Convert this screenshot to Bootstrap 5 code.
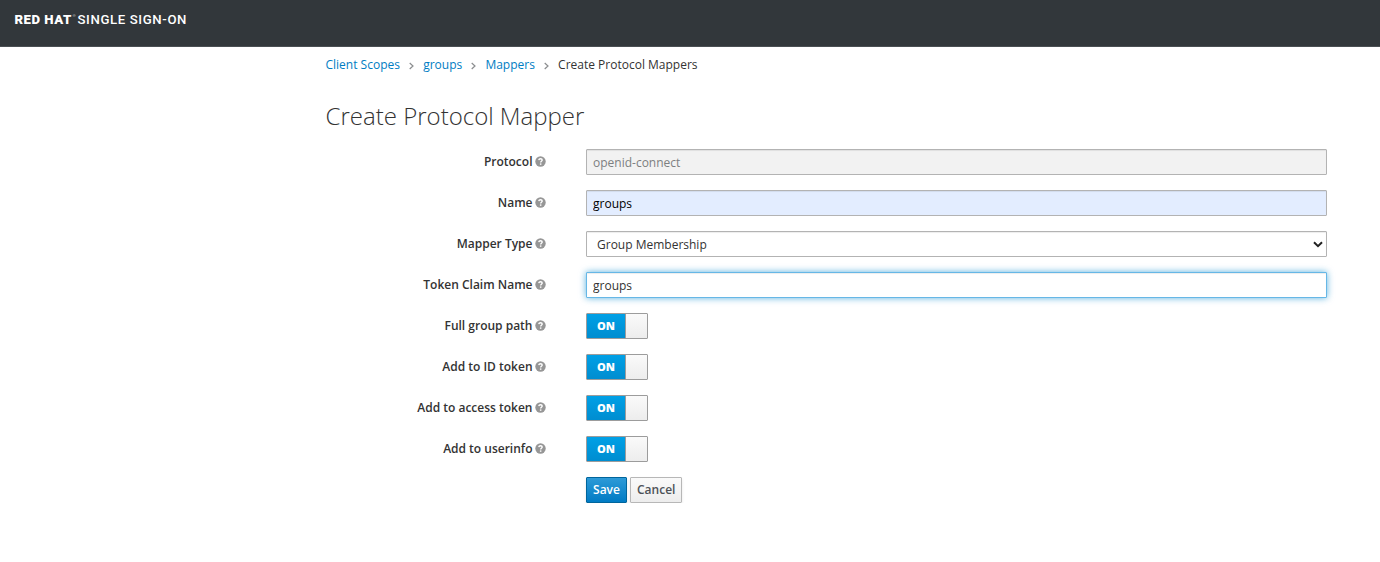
<!DOCTYPE html>
<html lang="en">
<head>
<meta charset="utf-8">
<meta name="viewport" content="width=device-width, initial-scale=1">
<title>Create Protocol Mapper</title>
<link rel="stylesheet" href="https://cdn.jsdelivr.net/npm/bootstrap@5.3.0/dist/css/bootstrap.min.css">
<style>
body{font-family:"Open Sans",sans-serif;font-size:12px;line-height:20px;color:#333;overflow:hidden}
.topbar{height:47px;background:#32373b;border-bottom:1px solid #4a4f53;padding:0 0 0 14.5px}
.brand{font:500 13.2px/16px Roboto,sans-serif;color:#fff;margin-top:12px;white-space:nowrap}
.brand-a{font-weight:900;letter-spacing:.5px;width:58px}
.brand-tm{font-size:4px;line-height:8px;width:5px;opacity:.6}
.brand-b{letter-spacing:.62px}
.page{width:1002px;margin-left:325px;padding-top:8px}
.breadcrumb{--bs-breadcrumb-divider:none;margin:0 0 0 .5px;font-size:12px}
.breadcrumb a{color:#007dc3;text-decoration:none}
.chev{width:5px;height:8px;margin:1px 9.1px 0;fill:none;stroke:#8b8d8f;stroke-width:1.2}
h1{font-size:24px;font-weight:300;line-height:26px;margin:28px 0 20px .6px;color:#333}
.rows{display:grid;row-gap:15px}
.line{display:grid;grid-template-columns:221px 741px;column-gap:40px;height:26px}
.line label{font-weight:600;justify-self:end;display:flex;align-items:center;gap:2.5px;height:26px;white-space:nowrap}
.help{width:11px;height:11px;margin-bottom:1px}
.form-control,.form-select{height:26px;border:1px solid #b3b3b3;border-radius:1px;padding:2px 6px;font-size:12px;line-height:20px;color:#333;box-shadow:inset 0 1px 1px rgba(0,0,0,.075)}
.form-control:disabled{background:#f2f2f2;color:#7d7f81}
.filled{background:#e3edff!important;color:#000}
.active-field{border-color:#66b7e6;box-shadow:inset 0 1px 1px rgba(0,0,0,.075),0 0 7px rgba(0,136,206,.65)}
.form-select{padding:3px 6px 1px 10px;background-image:url("data:image/svg+xml,%3Csvg xmlns='http://www.w3.org/2000/svg' viewBox='0 0 10 7'%3E%3Cpath d='M1 1.2 5 5.2 9 1.2' fill='none' stroke='%23222' stroke-width='2'/%3E%3C/svg%3E");background-size:10px 7px;background-position:right 3px center}
.toggle{width:62px;height:26px;border:1px solid #9c9c9c;border-radius:1px;padding:0;display:flex;overflow:hidden;background:none}
.toggle-on{width:39px;line-height:24px;font-size:11px;font-weight:800;color:#fff;background:linear-gradient(#00a0e6,#008dd0);border-right:1px solid #9c9c9c;text-align:center;flex:none}
.toggle-knob{flex:1;height:24px;background:linear-gradient(#fafafa,#ededed)}
.btn{height:26px;border-radius:1px;padding:2px 6px;font-size:12px;line-height:20px;font-weight:600;box-shadow:0 2px 3px rgba(3,3,3,.1);width:52px}
.btn-primary{background:linear-gradient(#2d9ad7,#007bc4);border-color:#00659c;width:41px}
.btn-light{background:linear-gradient(#fafafa,#ededed);border-color:#b7b7b7;color:#4d5258}
</style>
</head>
<body class="bg-white">
<svg class="d-none"><symbol id="q" viewBox="0 0 11 11"><circle cx="5.5" cy="5.5" r="5.2" fill="#969696"/><path d="M3.7 4.1C4 2.9 4.8 2.7 5.5 2.7c1 0 1.7.6 1.7 1.4 0 1.1-1.5 1.1-1.5 2.3" fill="none" stroke="#fff" stroke-width="1.4"/><path d="M4.9 7.4h1.5v1.4H4.9z" fill="#fff"/></symbol></svg>
<nav class="topbar d-flex align-items-start"><div class="brand d-flex"><span class="brand-a">RED HAT</span><span class="brand-tm">®</span><span class="brand-b">SINGLE SIGN-ON</span></div></nav>
<main class="page">
<nav><ol class="breadcrumb align-items-center">
<li><a href="#">Client Scopes</a></li><svg class="chev" viewBox="0 0 5 8"><path d="M.7 1 4 4 .7 7"/></svg>
<li><a href="#">groups</a></li><svg class="chev" viewBox="0 0 5 8"><path d="M.7 1 4 4 .7 7"/></svg>
<li><a href="#">Mappers</a></li><svg class="chev" viewBox="0 0 5 8"><path d="M.7 1 4 4 .7 7"/></svg>
<li>Create Protocol Mappers</li></ol></nav>
<h1>Create Protocol Mapper</h1>
<form class="rows">
<div class="line"><label>Protocol<svg class="help"><use href="#q"/></svg></label><input class="form-control" value="openid-connect" disabled></div>
<div class="line"><label>Name<svg class="help"><use href="#q"/></svg></label><input class="form-control filled" value="groups"></div>
<div class="line"><label>Mapper Type<svg class="help"><use href="#q"/></svg></label><select class="form-select"><option>Group Membership</option></select></div>
<div class="line"><label>Token Claim Name<svg class="help"><use href="#q"/></svg></label><input class="form-control active-field" value="groups"></div>
<div class="line"><label>Full group path<svg class="help"><use href="#q"/></svg></label><button type="button" class="toggle"><span class="toggle-on">ON</span><span class="toggle-knob"></span></button></div>
<div class="line"><label>Add to ID token<svg class="help"><use href="#q"/></svg></label><button type="button" class="toggle"><span class="toggle-on">ON</span><span class="toggle-knob"></span></button></div>
<div class="line"><label>Add to access token<svg class="help"><use href="#q"/></svg></label><button type="button" class="toggle"><span class="toggle-on">ON</span><span class="toggle-knob"></span></button></div>
<div class="line"><label>Add to userinfo<svg class="help"><use href="#q"/></svg></label><button type="button" class="toggle"><span class="toggle-on">ON</span><span class="toggle-knob"></span></button></div>
<div class="line"><span></span><div class="d-flex" style="gap:3px"><button type="button" class="btn btn-primary">Save</button><button type="button" class="btn btn-light">Cancel</button></div></div>
</form>
</main>
<script src="https://cdn.jsdelivr.net/npm/bootstrap@5.3.0/dist/js/bootstrap.bundle.min.js"></script>
</body>
</html>
